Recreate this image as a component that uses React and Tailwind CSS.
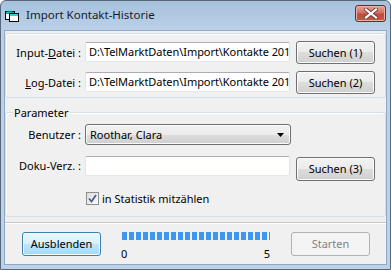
import React from "react";

const font = "font-['Noto_Sans',sans-serif]";

function Btn({ children, className = "" }) {
  return (
    <div
      className={
        "flex items-center justify-center rounded-[3px] border border-[#707070] bg-[linear-gradient(#f2f2f2,#ebebeb_50%,#dddddd_50%,#cfcfcf)] shadow-[inset_0_0_0_1px_#fbfbfb] text-black " +
        className
      }
    >
      {children}
    </div>
  );
}

function TextBox({ value, className = "" }) {
  return (
    <div
      className={
        "flex items-center overflow-hidden whitespace-nowrap bg-white border border-[#e2e3ea] border-t-[#abadb3] border-b-[#e3e9ef] rounded-[2px] pl-[3px] text-black tracking-[-0.06px] " +
        className
      }
    >
      <span className="block">{value}</span>
    </div>
  );
}

function TitleIcon() {
  return (
    <svg width="14" height="13" viewBox="0 0 14 13">
      <rect x="0.5" y="2.5" width="9" height="8" fill="#fff" stroke="#000" />
      <rect x="1" y="3" width="8" height="2" fill="#2aa7b8" />
      <rect x="4.5" y="4.5" width="9" height="8" fill="#fff" stroke="#000" />
      <rect x="5" y="5" width="8" height="2" fill="#3ac9d6" />
      <rect x="1.5" y="0.5" width="6" height="2" fill="#5fd9e6" />
    </svg>
  );
}

export default function App() {
  const blocks = Array.from({ length: 21 });
  return (
    <div className={"w-[391px] h-[270px] flex flex-col overflow-hidden rounded-t-[6px] border border-[#56677b] bg-[linear-gradient(#a7c0dc,#bcd1e8_30px,#bcd2ea)] text-[11px] leading-[14px] " + font}>
      {/* title bar */}
      <div className="h-[29px] flex items-center pl-[4px] shrink-0">
        <TitleIcon />
        <span className="ml-[7px] text-[11.5px] text-[#141c2a] -mt-[1px]">Import Kontakt-Historie</span>
        <div className="ml-auto mr-[4px] mb-[5px] w-[31px] h-[17px] rounded-[3px] border border-[#6e2a2a] bg-[linear-gradient(#e8a394,#d1705f_45%,#be4b3a_55%,#c45a45)] shadow-[inset_0_0_0_1px_#eab0a5] flex items-center justify-center">
          <svg width="14" height="11" viewBox="0 0 14 11">
            <path d="M2 1.5 L12 9.5 M12 1.5 L2 9.5" stroke="#6d3b3b" strokeWidth="4" strokeLinecap="square" />
            <path d="M2 1.5 L12 9.5 M12 1.5 L2 9.5" stroke="#fff" strokeWidth="2.2" strokeLinecap="square" />
          </svg>
        </div>
      </div>

      {/* client area */}
      <div className="flex-1 mx-[3px] mb-[4px] bg-[#f0f0f0] border border-[#8fa8c4] flex flex-col text-black">
        {/* group 1 */}
        <div className="mt-[2px] border border-[#d5dfe5] rounded-[3px] shadow-[inset_1px_1px_0_#fff] pt-[7px] pb-[3px] flex flex-col gap-[7px]">
          <div className="flex items-center h-[23px]">
            <div className="w-[79px] text-right pr-[4px]">
              Input-<span className="underline">D</span>atei :
            </div>
            <TextBox className="w-[205px] h-[20px] -mt-[2px]" value="D:\TelMarktDaten\Import\Kontakte 2014.csv" />
            <Btn className="ml-[6px] w-[79px] h-[23px]">Suchen (1)</Btn>
          </div>
          <div className="flex items-center h-[23px]">
            <div className="w-[79px] text-right pr-[4px]">
              <span className="underline">L</span>og-Datei :
            </div>
            <TextBox className="w-[205px] h-[20px] -mt-[2px]" value="D:\TelMarktDaten\Import\Kontakte 2014.log" />
            <Btn className="ml-[6px] w-[79px] h-[23px]">Suchen (2)</Btn>
          </div>
        </div>

        {/* group 2 */}
        <div className="relative mt-[14px] border border-[#d5dfe5] rounded-[3px] shadow-[inset_1px_1px_0_#fff] pt-[11px] pb-[11px]">
          <span className="absolute -top-[7px] left-[7px] px-[1px] bg-[#f0f0f0]">Parameter</span>
          <div className="flex items-center h-[21px]">
            <div className="w-[79px] text-right pr-[4px]">Benutzer :</div>
            <div className="w-[206px] h-[21px] rounded-[3px] border border-[#707070] bg-[linear-gradient(#f2f2f2,#ebebeb_50%,#dddddd_50%,#cfcfcf)] shadow-[inset_0_0_0_1px_#fbfbfb] flex items-center pl-[4px] pr-[6px]">
              <span>Roothar, Clara</span>
              <svg className="ml-auto" width="7" height="4" viewBox="0 0 7 4">
                <path d="M0 0 H7 L3.5 4 Z" fill="#000" />
              </svg>
            </div>
          </div>
          <div className="flex items-start h-[25px] mt-[11px]">
            <div className="w-[79px] text-right pr-[4px] h-[20px] flex items-center justify-end">Doku-Verz. :</div>
            <TextBox className="w-[205px] h-[20px]" value="" />
            <Btn className="ml-[6px] mt-[1px] w-[79px] h-[24px]">Suchen (3)</Btn>
          </div>
          <div className="flex items-center h-[13px] mt-[11px] ml-[80px]">
            <div className="w-[13px] h-[13px] border border-[#8e8f8f] bg-[linear-gradient(135deg,#dcdcdc,#fdfdfd)] flex items-center justify-center">
              <svg width="9" height="9" viewBox="0 0 9 9">
                <path d="M1 4.5 L3.5 7.5 L8 1" stroke="#4b5f91" strokeWidth="1.8" fill="none" />
              </svg>
            </div>
            <span className="ml-[3px]">in Statistik mitzählen</span>
          </div>
        </div>

        {/* bottom strip */}
        <div className="mt-[5px] border-t border-[#c6c6c6] shadow-[inset_0_1px_0_#fff] flex items-start pt-[9px]">
          <div className="ml-[17px] w-[79px] h-[24px] rounded-[3px] border border-[#3c7fb1] bg-[linear-gradient(#eaf6fd,#d9f0fc_50%,#bee6fd_50%,#a7d9f5)] shadow-[inset_0_0_0_1px_#f4fbff] flex items-center justify-center">
            Ausblenden
          </div>
          <div className="ml-[21px] w-[148px] flex flex-col">
            <div className="flex gap-[2px] h-[8px]">
              {blocks.map((_, i) => (
                <div key={i} className="w-[5px] h-full bg-[#3d96ef]" />
              ))}
              <div className="w-[1px] h-full bg-[#3d96ef]" />
            </div>
            <div className="flex justify-between mt-[7px]">
              <span className="-ml-[1px]">0</span>
              <span>5</span>
            </div>
          </div>
          <div className="ml-[21px] w-[79px] h-[24px] rounded-[3px] border border-[#adb2b5] bg-[#f4f4f4] text-[#838383] flex items-center justify-center">
            Starten
          </div>
        </div>
      </div>
    </div>
  );
}
